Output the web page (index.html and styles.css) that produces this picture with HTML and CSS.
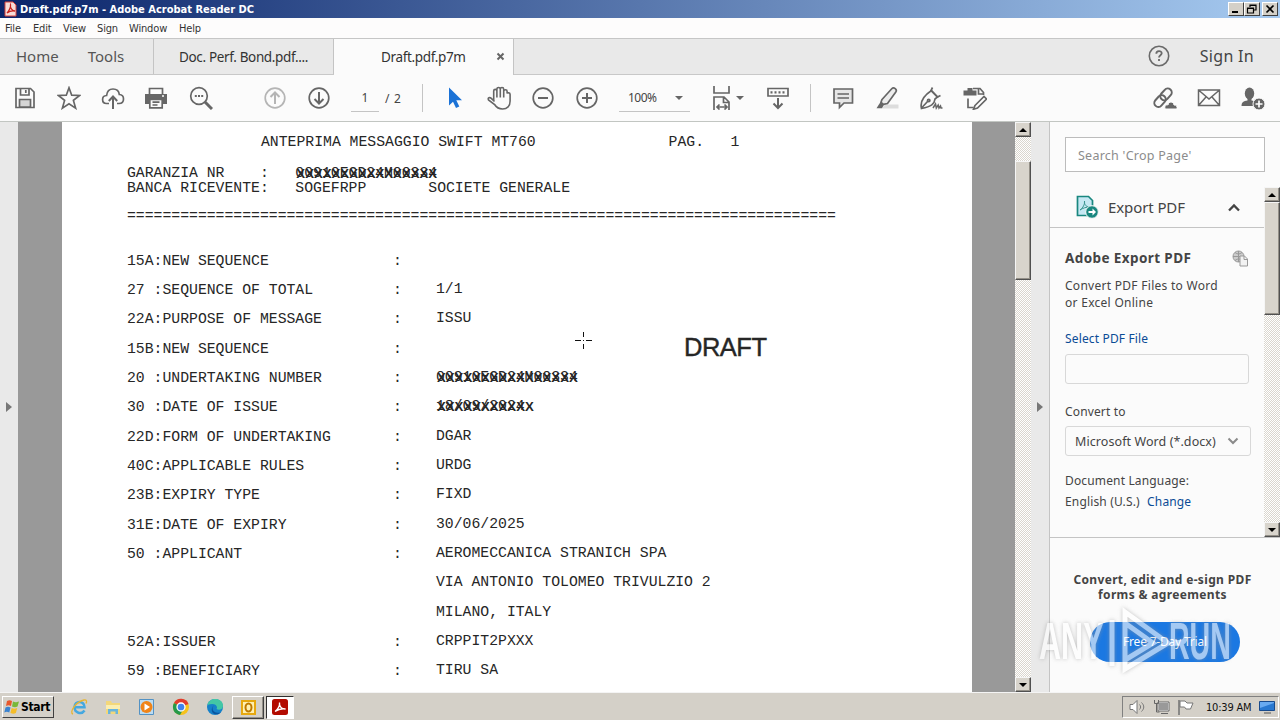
FILE: index.html
```
<!DOCTYPE html>
<html lang="en">
<head>
  <meta charset="utf-8">
  <title>Draft.pdf.p7m - Adobe Acrobat Reader DC</title>
  <link rel="stylesheet" href="styles.css">
</head>
<body>

<!-- Title bar -->
<div class="titlebar">
  <svg class="app-icon" width="13" height="16" viewBox="0 0 13 16"><path d="M1 1h8l3 3v11H1z" fill="#f6dcd8" stroke="#d8423a"/><path d="M3 12c2-2 4-6 3.500-8c-.8 3 2 6 4.500 6c-3-.6-6 .4-8 2z" fill="none" stroke="#c8201a" stroke-width="1.300"/></svg>
  <span class="title">Draft.pdf.p7m - Adobe Acrobat Reader DC</span>
  <div class="win-buttons">
    <span class="win-btn"><svg width="14" height="12"><path d="M3 9h6" stroke="#000" stroke-width="2"/></svg></span>
    <span class="win-btn"><svg width="14" height="12"><path d="M5 4V2h6v5H9M5 2.500h6M2.500 5h6v5h-6zM2.500 5.500h6" fill="none" stroke="#000" stroke-width="1.200"/></svg></span>
    <span class="win-btn close"><svg width="14" height="12"><path d="M3.500 2.500l7 7M10.500 2.500l-7 7" stroke="#000" stroke-width="1.700"/></svg></span>
  </div>
</div>

<div class="menubar">
  <span class="m1">File</span><span class="m2">Edit</span><span class="m3">View</span><span class="m4">Sign</span><span class="m5">Window</span><span class="m6">Help</span>
</div>

<!-- Tabs -->
<div class="tabs">
  <div class="tab nav"><span>Home</span><span>Tools</span></div>
  <div class="tab doc">Doc. Perf. Bond.pdf....</div>
  <div class="tab active"><span>Draft.pdf.p7m</span><svg width="9" height="9"><path d="M1.500 1.500l6 6M7.500 1.500l-6 6" stroke="#666" stroke-width="2"/></svg></div>
  <div class="account">
    <svg width="22" height="22" viewBox="0 0 22 22"><circle cx="11" cy="11" r="9.700" fill="none" stroke="#6a6a6a" stroke-width="1.600"/><path d="M8.300 8.800c0-3.600 5.400-3.400 5.400-.5c0 1.900-2.700 1.900-2.700 4.200M11 14v2" fill="none" stroke="#6a6a6a" stroke-width="1.800"/></svg>
    <span>Sign In</span>
  </div>
</div>

<!-- Toolbar -->
<div class="toolbar">
  <span class="tool"><svg viewBox="0 0 24 24"><path d="M3 2.500h14.500l3.500 3.500v15.500H3z"/><path d="M7.500 2.500v6.500h8.500V2.500M12.800 4v3"/><path d="M6.500 21v-7.500h11V21z" fill="#d5d5d5"/></svg></span>
  <span class="tool"><svg viewBox="0 0 24 24"><path d="M12 1.800l2.700 7.400 7.900.3-6.200 4.900 2.200 7.700L12 17.700l-6.600 4.400 2.200-7.700L1.400 9.500l7.900-.3z"/></svg></span>
  <span class="tool"><svg viewBox="0 0 24 24"><path d="M8 17.500H5.500C2.800 17.500 1.600 15.500 1.600 13.500c0-2.400 1.700-3.900 4-4C6 5.500 8.500 3 12 3c3.800 0 6 2.500 6.300 5.500c2.500.2 4.200 2 4.200 4.400c0 2.700-1.800 4.600-4.500 4.600h-2"/><path d="M12 23V11M7.800 15L12 10.500 16.200 15" stroke-width="2"/></svg></span>
  <span class="tool shift"><svg viewBox="0 0 24 24"><path d="M5.500 8V2.500h13V8"/><path d="M1 8h22v10h-4v-4.500H5V18H1z" fill="#666" stroke="none"/><path d="M18 10h2" stroke="#fff"/><path d="M5.800 13.500h12.400v8.300H5.800zM8.500 16.200h7M8.500 19h5"/></svg></span>
  <span class="tool"><svg viewBox="0 0 24 24"><circle cx="10" cy="10" r="8.300"/><path d="M16 16l7 7" stroke-width="3"/><path d="M5.800 10h2M9 10h2M12.200 10h2" stroke-width="1.800"/></svg></span>
  <span class="tool gap-left light"><svg viewBox="0 0 24 24"><circle cx="12" cy="12" r="9.800"/><path d="M12 18V6.500M7.500 11L12 6.500 16.500 11" stroke-width="2"/></svg></span>
  <span class="tool"><svg viewBox="0 0 24 24"><circle cx="12" cy="12" r="9.800"/><path d="M12 6v11.500M7.500 13l4.500 4.500 4.500-4.500" stroke-width="2"/></svg></span>
  <span class="page-no">1</span><span class="page-total">/ 2</span>
  <span class="sep"></span>
  <span class="tool gap-small"><svg viewBox="0 0 24 24"><path d="M6 1.500v18l4-3.800 3 6.300 3.300-1.500-3-6.300h5.700z" fill="#1b72d6" stroke="none"/></svg></span>
  <span class="tool"><svg viewBox="0 0 24 24"><path d="M6.700 14.500V5c0-2.200 3.200-2.200 3.200 0v6.500V3.200c0-2.200 3.400-2.200 3.400 0v8.300V3.200c0-2.200 3.400-2.200 3.400 0v8.300V5.200c0-2 3.400-2 3.400 0V7.500c.4-1 3-1 3 1V15c0 5-3 8-7.500 8c-4.500 0-6.500-2-8-4.500L1.500 14c-1-2.200 1.200-3 2.500-1.800l3.500 3.300" stroke-width="1.600"/></svg></span>
  <span class="tool"><svg viewBox="0 0 24 24"><circle cx="12" cy="12" r="9.800"/><path d="M7 12h10" stroke-width="2"/></svg></span>
  <span class="tool"><svg viewBox="0 0 24 24"><circle cx="12" cy="12" r="9.800"/><path d="M7 12h10M12 7v10" stroke-width="2"/></svg></span>
  <span class="zoom"><span>100%</span><i class="caret"></i></span>
  <span class="fit"><svg viewBox="0 0 24 24"><path d="M4 0v7h15V0M4 24V11h10l5 5v8M13.500 11v5.500H19M7 21h10M9.500 18.500L7 21l2.500 2.500M14.500 18.500L17 21l-2.500 2.500"/></svg><i class="caret"></i></span>
  <span class="tool"><svg viewBox="0 0 24 24"><path d="M2 2.500h20v7.500H2z"/><path d="M4.500 6.300h15" stroke-dasharray="2 2" stroke-width="2.200"/><path d="M12 12v9.500M7.500 17.500l4.500 4.500 4.500-4.500" stroke-width="2"/></svg></span>
  <span class="sep sep-right"></span>
  <span class="tool"><svg viewBox="0 0 24 24"><path d="M3 3h18.500v14H13l-4.500 4.500V17H3z" fill="#e6e6e6"/><path d="M6.500 8h11.500M6.500 12h11.500" stroke-width="1.500"/></svg></span>
  <span class="tool"><svg viewBox="0 0 24 24"><path d="M10 18.500h13.500v4H7z" fill="#ddd" stroke="none"/><path d="M7 13.500L16.500 3c2.500-2.500 6 .5 4.300 3L12.500 17.500l-4 .8-2.500-2z" fill="#ececec"/><path d="M5.500 16l3.300 3-1.800 3.200H1.500z" fill="#666" stroke="none"/></svg></span>
  <span class="tool"><svg viewBox="0 0 24 24"><path d="M12.500 4.500l6 6.500-2.500 2c-.5 5-3.500 7.500-13.500 9.500c-1.500-6 1-12 10-18zM2.500 22l6.500-7"/><path d="M13.500 1.500l-1.500 3 6.500 6.500 3-1.500"/><circle cx="9.700" cy="14.500" r="1.200"/><path d="M14 22l2.500-4 .8 4 1.900-3 .8 3 1.500-2 .5 2h1.500" stroke-width="1.500"/></svg></span>
  <span class="tool"><svg viewBox="0 0 24 24"><path d="M.5 4.500h4V2h5v2.500h4v5H.5z" fill="#666" stroke="none"/><path d="M10 2.500h7l3.500 4V9M5 12.500v9h5.500M15.500 3v5h5"/><path d="M12 19.500l9-9 2.500 2.500-9 9-4 1.200z" fill="#fff"/></svg></span>
  <div class="share">
    <span class="tool"><svg viewBox="0 0 24 24"><g transform="rotate(-48 10 11)" stroke-width="2"><rect x="-1.500" y="7.500" width="13" height="8" rx="4"/><rect x="7.500" y="7.500" width="13" height="8" rx="4"/></g><path d="M12 23c-.8-4 2-4.500 3-4c.5-4 5.500-4 6 0c2.500-.2 3.500 1.500 3 4z" fill="#666" stroke="#fbfbfb" stroke-width="1"/></svg></span>
    <span class="tool"><svg viewBox="0 0 24 24"><path d="M1.500 4h21v15.500h-21zM1.500 4L12 13 22.500 4M1.500 19.500L9 11M22.500 19.500L15 11" stroke-width="1.500"/></svg></span>
    <span class="tool"><svg viewBox="0 0 24 24"><ellipse cx="8.500" cy="7.500" rx="4.700" ry="6" fill="#666" stroke="none"/><path d="M6.500 11h4v3.500c4 .8 5.500 2 5.500 5.500H.5c0-4 2-5 6-5.500z" fill="#666" stroke="none"/><circle cx="18" cy="18" r="6" fill="#666" stroke="#fbfbfb" stroke-width="1"/><path d="M14.500 18h7M18 14.500v7" stroke="#fff"/></svg></span>
  </div>
</div>

<div class="workspace">
  <div class="strip"><i class="arrow"></i></div>
  <div class="viewer">
    <div class="page">
<pre class="head-line">ANTEPRIMA MESSAGGIO SWIFT MT760               PAG.   1</pre>
<pre class="bank-lines">GARANZIA NR    :   <span class="struck" data-over="XXXXXXXXXXXXXXXX">00910EGD24M00334</span>
BANCA RICEVENTE:   SOGEFRPP       SOCIETE GENERALE</pre>
<pre class="rule">================================================================================</pre>
      <div class="fields">
        <pre>15A:NEW SEQUENCE</pre><b>:</b><pre class="val"></pre>
        <pre>27 :SEQUENCE OF TOTAL</pre><b>:</b><pre class="val">1/1</pre>
        <pre>22A:PURPOSE OF MESSAGE</pre><b>:</b><pre class="val">ISSU</pre>
        <pre>15B:NEW SEQUENCE</pre><b>:</b><pre class="val"></pre>
        <pre>20 :UNDERTAKING NUMBER</pre><b>:</b><pre class="val"><span class="struck" data-over="XXXXXXXXXXXXXXXX">00910EGD24M00334</span></pre>
        <pre>30 :DATE OF ISSUE</pre><b>:</b><pre class="val"><span class="struck" data-over="XXXXXXXXXXX">18/09/2024</span></pre>
        <pre>22D:FORM OF UNDERTAKING</pre><b>:</b><pre class="val">DGAR</pre>
        <pre>40C:APPLICABLE RULES</pre><b>:</b><pre class="val">URDG</pre>
        <pre>23B:EXPIRY TYPE</pre><b>:</b><pre class="val">FIXD</pre>
        <pre>31E:DATE OF EXPIRY</pre><b>:</b><pre class="val">30/06/2025</pre>
        <pre>50 :APPLICANT</pre><b>:</b><pre class="val">AEROMECCANICA STRANICH SPA</pre>
        <pre></pre><b></b><pre class="val">VIA ANTONIO TOLOMEO TRIVULZIO 2</pre>
        <pre></pre><b></b><pre class="val">MILANO, ITALY</pre>
        <pre>52A:ISSUER</pre><b>:</b><pre class="val">CRPPIT2PXXX</pre>
        <pre>59 :BENEFICIARY</pre><b>:</b><pre class="val">TIRU SA</pre>
      </div>
      <span class="stamp">DRAFT</span>
      <svg class="crosshair" width="17" height="17"><path d="M0 8.500h6M11 8.500h6M8.500 0v5M8.500 12v5M8 8.500h1" stroke="#111"/></svg>
    </div>
  </div>
  <div class="scrollbar main-scroll">
    <span class="sb-btn"><i class="up"></i></span><span class="track before"></span><span class="thumb"></span><span class="track"></span><span class="sb-btn"><i class="down"></i></span>
  </div>
  <div class="strip right"><i class="arrow"></i></div>

  <!-- Right hand panel -->
  <div class="panel">
    <div class="search">Search 'Crop Page'</div>
    <div class="panel-scroll">
      <div class="panel-content">
        <div class="export-head">
          <svg width="23" height="24" viewBox="0 0 23 24"><path d="M1.500 1.500h11l4 4v15h-15z" fill="#c6e8f3" stroke="#19877f" stroke-width="1.700"/><path d="M4 15c3-2 5-6 4.500-9c-.5 4 2 6 5.500 6c-4 0-7 1-10 3z" fill="none" stroke="#38938f"/><circle cx="16" cy="17" r="6.300" fill="#19877f" stroke="#fafafa"/><path d="M12.500 17h5" stroke="#fff" stroke-width="2"/><path d="M16.500 13.500l3.500 3.500-3.500 3.500z" fill="#fff"/></svg>
          <span>Export PDF</span>
          <svg width="12" height="9"><path d="M1 7.500l5-5 5 5" fill="none" stroke="#444" stroke-width="2.300"/></svg>
        </div>
        <div class="export-body">
          <div class="sub-title"><span>Adobe Export PDF</span><svg width="17" height="17" viewBox="0 0 17 17"><circle cx="6.500" cy="6.500" r="5.500" fill="#ccc" stroke="#999"/><path d="M1 6.500h11M6.500 1v11M3 2.500c3 2 4 2 7 0M3 10.500c3-2 4-2 7 0" stroke="#999" fill="none"/><path d="M8 6h4.500l3 3v7H8z" fill="#f2f2f2" stroke="#999"/><path d="M12 6v3.500h3.500" fill="none" stroke="#999"/></svg></div>
          <p class="desc">Convert PDF Files to Word<br>or Excel Online</p>
          <a class="select-file">Select PDF File</a>
          <div class="file-box"></div>
          <div class="label">Convert to</div>
          <div class="dropdown"><span>Microsoft Word (*.docx)</span><svg width="12" height="8"><path d="M1.500 1.500L6 6l4.500-4.500" fill="none" stroke="#8a8a8a" stroke-width="2"/></svg></div>
          <div class="lang">Document Language:</div>
          <div class="lang-val">English (U.S.) <a>Change</a></div>
        </div>
      </div>
      <div class="scrollbar side-scroll">
        <span class="sb-btn"><i class="up"></i></span><span class="thumb"></span><span class="track"></span><span class="sb-btn"><i class="down"></i></span>
      </div>
    </div>
    <div class="promo">
      <p>Convert, edit and e-sign PDF<br><span>forms &amp; agreements</span></p>
      <span class="trial">Free 7-Day Trial</span>
    </div>
  </div>
</div>

<svg class="watermark" width="210" height="70" viewBox="0 0 210 70">
  <g class="wm-text"><text transform="translate(4 51) scale(.6 1)">ANY</text><text transform="translate(134 51) scale(.56 1)">RUN</text></g>
  <path d="M77 12v46M90 4l43 31-43 26zM90 15l28 20-28 17" class="wm-line"/>
</svg>

<!-- Taskbar -->
<div class="taskbar">
  <span class="start"><svg width="16" height="16" viewBox="0 0 16 16"><path d="M3 2c2-1 3-1 5 0L7 7C5 6 4 6 2 7z" fill="#e8582c"/><path d="M9 2.500c2 1 3 1 6 0l-1.500 5c-2 1-3 1-5.500 0z" fill="#78b83a"/><path d="M1.500 8.500c2-1 3-1 5 0l-1.200 5c-2-1-3-1-5 0z" fill="#3a83d0"/><path d="M7.700 9c2 1 3 1 5.500 0l-1.300 5c-2 1-3 1-5.500 0z" fill="#f5bd28"/></svg>Start</span>
  <span class="task ie"><svg width="18" height="18" viewBox="0 0 18 18"><path d="M14.500 12.500c-3 4.500-10 2.500-10-3.500c0-6.500 10-7 10 .3H5" fill="none" stroke="#45a8e0" stroke-width="2.500"/><path d="M3 16C-1 15 5 4 14 2c3-.3 3 1.500 2 3.500" fill="none" stroke="#e8b532" stroke-width="1.300"/></svg></span>
  <span class="task"><svg width="18" height="18" viewBox="0 0 18 18"><path d="M2 3h5l1 2h8v11H2z" fill="#f3d77a"/><path d="M2 7h14v4H2z" fill="#fbeeb0"/><path d="M4 16v-5h10v5h-2.500v-2.500h-5V16z" fill="#69b5dc"/></svg></span>
  <span class="task"><svg width="18" height="18" viewBox="0 0 18 18"><path d="M1.500 1.500h14v15h-14z" fill="#bcdcf2" stroke="#5392c4"/><circle cx="8.500" cy="9" r="6" fill="#f08418"/><path d="M6.500 5.500l5.500 3.500-5.500 3.500z" fill="#fff"/></svg></span>
  <span class="task"><svg width="18" height="18" viewBox="0 0 18 18"><circle cx="9" cy="9" r="8" fill="#f6c21c"/><path d="M9 9L2 5a8 8 0 0 1 14.500 1z" fill="#e23b2e"/><path d="M9 9L2 5a8 8 0 0 0 6 12l4-7z" fill="#26994a"/><circle cx="9" cy="9" r="4" fill="#3f82ee" stroke="#fff" stroke-width="1.300"/></svg></span>
  <span class="task"><svg width="18" height="18" viewBox="0 0 18 18"><circle cx="9" cy="9" r="8" fill="#1681c9"/><path d="M1.500 7C3-1 17-1 17 8c0 3.500-4 4.500-6.500 3c2-3-2-7-9-4z" fill="#43c7a5"/><path d="M8 7c-4 5 1 9 7 7.500c-6 5-13-1-7-7.500z" fill="#0b559f"/></svg></span>
  <span class="task framed"><svg width="17" height="17" viewBox="0 0 17 17"><path d="M1 1h15v15H1z" fill="#e7a80e"/><path d="M3 3h11v11H3z" fill="#fff0b0"/><ellipse cx="8.500" cy="8.500" rx="3" ry="4" fill="none" stroke="#bd7900" stroke-width="2"/></svg></span>
  <span class="task pressed"><svg width="16" height="16" viewBox="0 0 16 16"><rect width="16" height="16" rx="2.500" fill="#b30b00"/><path d="M3 12.500c3-2 5-6 4.500-9c-.5 4 2.500 7 6 6.500c-4-.8-7.500.5-10.500 2.500z" fill="none" stroke="#fff" stroke-width="1.300"/></svg></span>
  <div class="tray">
    <svg width="17" height="16" viewBox="0 0 17 16"><path d="M1 5.500h3L8 1.500v13l-4-4H1z" fill="#fff" stroke="#777"/><path d="M10.500 5.500c1.500 1.500 1.500 3.500 0 5M12.500 3.500c3 3 3 6 0 9" fill="none" stroke="#777"/></svg>
    <svg width="17" height="16" viewBox="0 0 17 16"><path d="M5.500 3.500h10v8h-10z" fill="#999" stroke="#fff"/><path d="M5 3h11v9H5zM8 14.500h7M1.500 1v3.500h4V1M3.500 5v8h3" fill="none" stroke="#666"/></svg>
    <svg width="17" height="16" viewBox="0 0 17 16"><path d="M2 1v15" stroke="#777" stroke-width="1.600"/><path d="M3 2h5l2 2h6l-2.500 6H9L7.500 8H3z" fill="#fff" stroke="#777"/></svg>
    <span class="clock">10:39 AM</span>
    <svg width="16" height="14" viewBox="0 0 16 14"><path d="M.5 1.500h15v9H.5z" fill="#2878d0" stroke="#174a8c"/><path d="M1 8l14-5v-1H1z" fill="#68aaf0"/><path d="M5 13h7" stroke="#555"/></svg>
  </div>
</div>

</body>
</html>
```
FILE: styles.css
```
* {
  box-sizing: border-box;
}

body {
  margin: 0;
  width: 1280px;
  height: 720px;
  overflow: hidden;
  display: flex;
  flex-direction: column;
  font-family: "Noto Sans", sans-serif;
  color: #444;
  background: #fbfbfb;
}

svg {
  flex: none;
  display: block;
}

/* Title bar */
.titlebar {
  height: 18px;
  display: flex;
  align-items: center;
  padding: 0 2px 0 4px;
  background: linear-gradient(to right, #0a246a, #a6caf0);
}

.title {
  margin-left: 3px;
  font: bold 11px "DejaVu Sans Condensed", sans-serif;
  color: #fff;
  white-space: nowrap;
}

.win-buttons {
  margin-left: auto;
  display: flex;
}

.win-btn {
  width: 16px;
  height: 14px;
  background: #d4d0c8;
  border: 1px solid;
  border-color: #fff #404040 #404040 #fff;
}

.close {
  margin-left: 2px;
}

.menubar {
  height: 20px;
  display: flex;
  align-items: center;
  padding-left: 5px;
  font: 11px "DejaVu Sans Condensed", sans-serif;
  letter-spacing: -0.15px;
  color: #333;
  background: #fdfcfc;
}

.m1 { width: 28px; }
.m2 { width: 30px; }
.m3 { width: 34px; }
.m4 { width: 32px; }
.m5 { width: 50px; }

/* Tabs */
.tabs {
  height: 37px;
  display: flex;
  background: #e9e9e9;
  border-top: 1px solid #c6c6c6;
  border-bottom: 1px solid #c8c8c8;
}

.tab {
  display: flex;
  align-items: center;
  font-size: 13.5px;
  letter-spacing: -0.35px;
  color: #333;
  white-space: nowrap;
  border-right: 1px solid #c4c4c4;
}

.nav {
  width: 154px;
  padding: 0 0 2px 16px;
  gap: 29px;
  font-size: 15px;
  letter-spacing: 0;
  color: #555;
}

.doc {
  width: 180px;
  padding-left: 25px;
}

.active {
  width: 180px;
  height: 36px;
  padding: 0 8px 1px 47px;
  justify-content: space-between;
  background: #fbfbfb;
}

.account {
  margin-left: auto;
  display: flex;
  align-items: center;
  gap: 30px;
  padding: 0 26px 2px 0;
  font-size: 16px;
  letter-spacing: 0.3px;
}

/* Toolbar */
.toolbar {
  height: 47px;
  display: flex;
  align-items: center;
  padding-left: 3px;
  border-bottom: 1px solid #c2c6c2;
  font-size: 12px;
}

.tool {
  flex: none;
  width: 44px;
  display: flex;
  justify-content: center;
}

.tool svg,
.fit svg {
  width: 24px;
  height: 24px;
  fill: none;
  stroke: #666;
  stroke-width: 1.7;
}

.shift { padding-right: 2px; }
.light svg { stroke: #b5b5b5; }
.gap-left { margin-left: 30px; }
.gap-small { margin-left: 10px; }

.page-no {
  width: 28px;
  height: 27px;
  margin-left: 10px;
  line-height: 26px;
  text-align: center;
  border-bottom: 1px solid #c4c4c4;
}

.page-total {
  width: 37px;
  margin-left: 6px;
  letter-spacing: 0.7px;
  white-space: pre;
}

.sep {
  width: 1px;
  height: 28px;
  background: #c4c4c4;
}

.sep-right {
  margin: 0 10px 0 10px;
}

.zoom {
  width: 71px;
  height: 27px;
  margin-left: 10px;
  padding: 0 7px 0 9px;
  display: flex;
  align-items: center;
  justify-content: space-between;
  letter-spacing: -0.5px;
  border-bottom: 1px solid #c4c4c4;
}

.caret {
  border: 4px solid transparent;
  border-top-color: #666;
  border-bottom: 0;
}

.fit {
  display: flex;
  align-items: center;
  width: 46px;
  margin-left: 20px;
  gap: 2px;
}

.share {
  display: flex;
  margin-left: auto;
  padding-right: 5px;
}

/* Document area */
.workspace {
  height: 570px;
  display: flex;
}

.strip {
  width: 18px;
  display: flex;
  align-items: center;
  justify-content: center;
  background: #e9e9e9;
}

.arrow {
  border: 5px solid transparent;
  border-left: 6px solid #777;
  border-right: 0;
}

.right {
  border-right: 1px solid #c4c4c4;
  width: 19px;
}

.viewer {
  width: 997px;
  padding-left: 44px;
  background: #999;
}

.page {
  position: relative;
  width: 910px;
  height: 570px;
  padding: 12px 0 0 65px;
  overflow: hidden;
  background: #fff;
  color: #262626;
  font: 14.77px "Liberation Mono", monospace;
}

.page pre {
  margin: 0;
  font: inherit;
}

.page .head-line {
  margin-left: 134px;
  line-height: 16px;
}

.page .bank-lines {
  margin-top: 16px;
  line-height: 14.5px;
}

.page .rule {
  margin-top: 13px;
  line-height: 16px;
}

.struck {
  position: relative;
}

/* typed-over characters on top of the original number */
.struck::after {
  content: attr(data-over);
  position: absolute;
  left: 1px;
  top: 2px;
  font: bold 13.2px/1 "Liberation Sans", sans-serif;
}

.fields {
  display: grid;
  grid-template-columns: 266px 43px 1fr;
  grid-auto-rows: 29.35px;
  align-items: center;
  margin-top: 22px;
}

.fields b {
  font-weight: normal;
}

.fields .val {
  padding-bottom: 2px;
}

.stamp {
  position: absolute;
  left: 622px;
  top: 211px;
  font: 25.5px "Liberation Sans", sans-serif;
  letter-spacing: -0.5px;
  -webkit-text-stroke: 0.4px #262626;
}

.crosshair {
  position: absolute;
  left: 513px;
  top: 210px;
}

/* Classic scrollbars */
.scrollbar {
  flex: none;
  width: 16px;
  display: flex;
  flex-direction: column;
}

.track {
  flex: 1;
  background: repeating-conic-gradient(#fff 0 25%, #dad6ce 0 50%) 0 0 / 2px 2px;
}

.sb-btn,
.thumb {
  flex: none;
  background: #d8d4cc;
  border: 1px solid;
  border-color: #f5f5f5 #505050 #505050 #f5f5f5;
  box-shadow: inset -1px -1px #949088;
}

.sb-btn {
  height: 15px;
  display: flex;
  align-items: center;
  justify-content: center;
}

.up {
  border: 4px solid transparent;
  border-top: 0;
  border-bottom-color: #000;
}

.down {
  border: 4px solid transparent;
  border-bottom: 0;
  border-top-color: #000;
}

.main-scroll .before { flex: none; height: 24px; }
.main-scroll .thumb { height: 119px; }
.side-scroll .thumb { height: 113px; }

/* Right hand panel */
.panel {
  width: 230px;
  display: flex;
  flex-direction: column;
  background: #fbfbfb;
  font-size: 12px;
  letter-spacing: 0.15px;
}

.search {
  width: 200px;
  height: 35px;
  margin: 15px 0 15px 15px;
  padding-left: 12px;
  line-height: 35px;
  font-size: 12.5px;
  letter-spacing: 0.25px;
  color: #8c8c8c;
  background: #fff;
  border: 1px solid #bcbcbc;
}

.panel-scroll {
  height: 351px;
  display: flex;
  border-bottom: 1px solid #c4c4c4;
}

.panel-content {
  width: 214px;
}

.export-head {
  height: 41px;
  display: flex;
  align-items: center;
  padding: 0 24px 0 26px;
  font-size: 15px;
  letter-spacing: -0.1px;
  border-bottom: 1px solid #c4c4c4;
}

.export-head span {
  margin: 0 auto 0 9px;
}

.export-body {
  padding: 20px 0 0 15px;
  white-space: nowrap;
}

.sub-title {
  display: flex;
  align-items: center;
  justify-content: space-between;
  height: 20px;
  padding-right: 15px;
  font-size: 13.5px;
  font-weight: bold;
  letter-spacing: 0.4px;
}

.desc {
  margin: 9px 0 0;
  line-height: 17px;
  letter-spacing: 0.28px;
}

.select-file {
  display: block;
  margin-top: 19px;
  line-height: 17px;
}

a {
  color: #0a4b96;
}

.file-box {
  width: 184px;
  height: 30px;
  margin-top: 7px;
  border: 1px solid #d8d8d8;
  border-radius: 3px;
}

.label {
  margin-top: 19px;
  line-height: 17px;
}

.dropdown {
  display: flex;
  align-items: center;
  justify-content: space-between;
  width: 186px;
  height: 30px;
  margin-top: 6px;
  padding: 0 11px 0 9px;
  font-size: 12.5px;
  letter-spacing: 0.08px;
  border: 1px solid #d8d8d8;
  border-radius: 3px;
}

.lang {
  margin-top: 16px;
  line-height: 17px;
}

.lang-val {
  margin-top: 4px;
  line-height: 17px;
}

.lang-val a {
  margin-left: 4px;
}

.promo {
  display: flex;
  flex-direction: column;
  align-items: center;
  padding: 34px 6px 0 0;
}

.promo p {
  margin: 0 0 0 1px;
  text-align: center;
  line-height: 15px;
  font-weight: bold;
  letter-spacing: 0.35px;
  white-space: nowrap;
}

.trial {
  width: 150px;
  height: 40px;
  margin: 20px 0 0 6px;
  line-height: 40px;
  text-align: center;
  letter-spacing: -0.2px;
  color: #fff;
  background: #1b78e2;
  border-radius: 20px;
}

/* Watermark lies over the panel */
.watermark {
  position: absolute;
  left: 1035px;
  top: 608px;
  overflow: visible;
  opacity: 0.6;
  filter: drop-shadow(0 0 2px #999);
}

.wm-text {
  font: bold 51px "Liberation Sans", sans-serif;
  fill: #fff;
}

.wm-line {
  fill: none;
  stroke: #fff;
  stroke-width: 5;
}

/* Taskbar */
.taskbar {
  height: 28px;
  display: flex;
  align-items: center;
  padding: 1px 1px 0 2px;
  background: #d4d0c8;
  border-top: 1px solid #f4f4f4;
}

.start {
  width: 52px;
  height: 22px;
  margin-right: 8px;
  display: flex;
  align-items: center;
  padding-left: 1px;
  font: bold 12px "DejaVu Sans Condensed", sans-serif;
  letter-spacing: -0.3px;
  color: #000;
  border: 1px solid;
  border-color: #fff #404040 #404040 #fff;
}

.start svg {
  margin-right: 1px;
}

.task {
  width: 34px;
  height: 23px;
  display: flex;
  align-items: center;
  justify-content: center;
}

.framed {
  width: 32px;
  border: 1px solid;
  border-color: #fff #404040 #404040 #fff;
  box-shadow: inset -1px -1px #949088;
}

.pressed {
  width: 28px;
  margin-left: 2px;
  background: #fff;
  border: 1px solid;
  border-color: #303030 #fff #fff #303030;
}

.tray {
  height: 22px;
  width: 157px;
  margin-left: auto;
  display: flex;
  align-items: center;
  gap: 7px;
  padding-left: 6px;
  border: 1px solid;
  border-color: #808080 #fff #fff #808080;
}

.clock {
  margin-left: 5px;
  width: 46px;
  white-space: nowrap;
  font: 11px "DejaVu Sans Condensed", sans-serif;
  letter-spacing: -0.2px;
  color: #111;
}
```
